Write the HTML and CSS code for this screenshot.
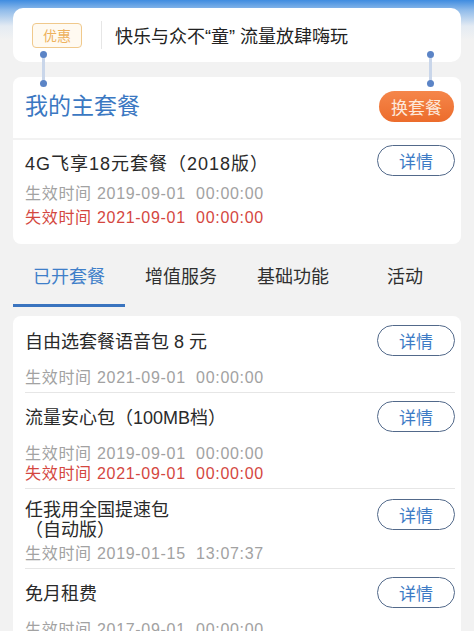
FILE: index.html
```html
<!DOCTYPE html>
<html lang="zh-CN">
<head>
    <meta charset="UTF-8">
    <meta name="viewport" content="width=device-width, initial-scale=1.0">
    <title>我的套餐</title>
    <link rel="stylesheet" href="styles.css">
</head>
<body>
    <div class="page">
        <div class="notice">
            <span class="badge">优惠</span>
            <span class="divider"></span>
            <span class="notice-text">快乐与众不“童” 流量放肆嗨玩</span>
        </div>

        <div class="main">
            <span class="clip clip-left"></span>
            <span class="clip clip-right"></span>
            <div class="main-head">
                <h2>我的主套餐</h2>
                <button class="change-btn">换套餐</button>
            </div>
            <div class="main-plan">
                <div class="item-row">
                    <div class="item-name">4G飞享18元套餐（2018版）</div>
                    <button class="detail-btn">详情</button>
                </div>
                <div class="date">生效时间 2019-09-01&nbsp;&nbsp;00:00:00</div>
                <div class="date expire">失效时间 2021-09-01&nbsp;&nbsp;00:00:00</div>
            </div>
        </div>

        <div class="tabs">
            <div class="tab active">已开套餐</div>
            <div class="tab">增值服务</div>
            <div class="tab">基础功能</div>
            <div class="tab">活动</div>
        </div>

        <div class="list">
            <div class="item">
                <div class="item-row">
                    <div class="item-name">自由选套餐语音包 8 元</div>
                    <button class="detail-btn">详情</button>
                </div>
                <div class="date">生效时间 2021-09-01&nbsp;&nbsp;00:00:00</div>
            </div>
            <div class="item">
                <div class="item-row">
                    <div class="item-name">流量安心包（100MB档）</div>
                    <button class="detail-btn">详情</button>
                </div>
                <div class="date">生效时间 2019-09-01&nbsp;&nbsp;00:00:00</div>
                <div class="date expire">失效时间 2021-09-01&nbsp;&nbsp;00:00:00</div>
            </div>
            <div class="item tall">
                <div class="item-row">
                    <div class="item-name">任我用全国提速包<br>（自动版）</div>
                    <button class="detail-btn">详情</button>
                </div>
                <div class="date">生效时间 2019-01-15&nbsp;&nbsp;13:07:37</div>
            </div>
            <div class="item">
                <div class="item-row">
                    <div class="item-name">免月租费</div>
                    <button class="detail-btn">详情</button>
                </div>
                <div class="date">生效时间 2017-09-01&nbsp;&nbsp;00:00:00</div>
            </div>
        </div>
    </div>
</body>
</html>
```

FILE: styles.css
```css
html, body {
    height: 100%;
    overflow: hidden;
}
body {
    margin: 0;
    font-family: "Liberation Sans", "Noto Sans CJK SC", sans-serif;
    background: linear-gradient(to bottom, #3f8ce0 0, #8fbbea 10px, #e4ebf3 26px, #f2f2f2 40px);
    color: #333;
}
.page {
    padding: 8px 13px 0;
}
.notice {
    height: 54px;
    background: #fff;
    border-radius: 10px;
    display: flex;
    align-items: center;
    padding-left: 19px;
}
.badge {
    width: 48px;
    height: 23px;
    border: 1px solid #f0c98c;
    border-radius: 4px;
    background: #fffaf1;
    color: #eeb25e;
    font-size: 14px;
    display: flex;
    align-items: center;
    justify-content: center;
}
.divider {
    width: 1px;
    height: 28px;
    background: #e6e6e6;
    margin: 0 13px 0 19px;
}
.notice-text {
    font-size: 18px;
    color: #222;
}
.main {
    position: relative;
    margin-top: 15px;
}
.clip {
    position: absolute;
    top: -26px;
    width: 7px;
    height: 36px;
}
.clip::before {
    content: "";
    position: absolute;
    left: 2px;
    top: 4px;
    width: 3px;
    height: 28px;
    background: #c9d6ea;
}
.clip::after {
    content: "";
    position: absolute;
    left: 0;
    top: 0;
    width: 7px;
    height: 7px;
    border-radius: 50%;
    background: #5b84c6;
    box-shadow: 0 29px 0 #5b84c6;
}
.clip-left {
    left: 27px;
}
.clip-right {
    left: 414px;
}
.main-head {
    height: 58px;
    background: #fff;
    border-radius: 8px 8px 0 0;
    display: flex;
    align-items: center;
    justify-content: space-between;
    padding: 0 7px 3px 12px;
}
.main-head h2 {
    margin: 0;
    font-size: 23px;
    line-height: 30px;
    font-weight: normal;
    color: #3b78c2;
}
.change-btn {
    width: 75px;
    height: 31px;
    border: none;
    border-radius: 16px;
    background: linear-gradient(to bottom, #f5864a, #ec6c2c);
    color: #fde9dc;
    font-family: inherit;
    font-size: 17px;
    padding: 0;
}
.main-plan {
    margin-top: 2px;
    background: #fff;
    border-radius: 0 0 8px 8px;
    padding: 5px 6px 14px 12px;
}
.main-plan .item-name {
    letter-spacing: 1px;
}
.item-row {
    display: flex;
    align-items: center;
    justify-content: space-between;
    min-height: 31px;
}
.item-name {
    font-size: 18px;
    color: #2a2a2a;
    line-height: 24px;
    padding-top: 6px;
}
.detail-btn {
    flex: none;
    width: 78px;
    height: 31px;
    border: 1.5px solid #52698a;
    border-radius: 16px;
    background: #fff;
    color: #3d7bc5;
    font-family: inherit;
    font-size: 17px;
    padding: 0;
}
.date {
    font-size: 16px;
    letter-spacing: 0.7px;
    color: #a2a2a2;
    line-height: 24px;
}
.main-plan .item-row + .date {
    margin-top: 6px;
}
.date.expire {
    color: #d4473f;
}
.tabs {
    display: flex;
}
.tab {
    flex: 1;
    text-align: center;
    font-size: 18px;
    color: #2f2f2f;
    line-height: 26px;
    padding: 20px 0 14px;
    border-bottom: 3px solid transparent;
}
.tab.active {
    color: #3f7fc9;
    border-bottom-color: #3a74bf;
}
.list {
    margin-top: 9px;
    background: #fff;
    border-radius: 8px 8px 0 0;
    padding: 1px 6px 0 12px;
}
.item {
    padding: 8px 0 4px;
    border-bottom: 1px solid #e6e6e6;
}
.item .item-name {
    padding-top: 3px;
}
.item.tall .item-name {
    line-height: 20px;
}
.item.tall .detail-btn {
    margin-bottom: 8px;
}
.item .date {
    line-height: 20px;
}
.item .item-row + .date {
    margin-top: 12px;
}
.item.tall .item-row + .date {
    margin-top: 4px;
}
```
